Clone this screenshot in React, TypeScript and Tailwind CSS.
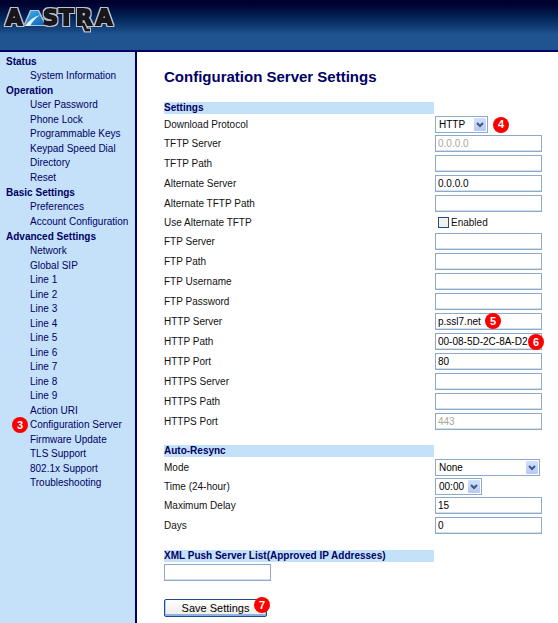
import type { ReactNode } from "react";

type NavGroup = { title: string; items: string[] };

const NAV: NavGroup[] = [
  { title: "Status", items: ["System Information"] },
  {
    title: "Operation",
    items: ["User Password", "Phone Lock", "Programmable Keys", "Keypad Speed Dial", "Directory", "Reset"],
  },
  { title: "Basic Settings", items: ["Preferences", "Account Configuration"] },
  {
    title: "Advanced Settings",
    items: [
      "Network", "Global SIP", "Line 1", "Line 2", "Line 3", "Line 4", "Line 5", "Line 6", "Line 7",
      "Line 8", "Line 9", "Action URI", "Configuration Server", "Firmware Update", "TLS Support",
      "802.1x Support", "Troubleshooting",
    ],
  },
];

const INPUT =
  "block h-[17px] w-[107px] rounded-none border border-[#8dabc8] bg-white px-[2px] text-[10px] leading-[15px] text-black shadow-[inset_0_-1px_0_#d3e0ec] outline-none disabled:text-[#aca899]";

function Badge({ n, className = "" }: { n: number; className?: string }) {
  return (
    <span
      className={`flex size-4 shrink-0 items-center justify-center rounded-full bg-[#fa0000] text-[11px] leading-none font-bold text-white ${className}`}
    >
      {n}
    </span>
  );
}

function Logo() {
  return (
    <svg width="120" height="34" viewBox="0 0 120 34" role="img" aria-label="Aastra">
      <defs>
        <linearGradient id="peak" x1="0" y1="0" x2="1" y2="1">
          <stop offset="0" stopColor="#35b4f2" />
          <stop offset="1" stopColor="#0a63b8" />
        </linearGradient>
        <filter id="rim" x="-5%" y="-20%" width="110%" height="140%">
          <feMorphology in="SourceAlpha" operator="dilate" radius="1" result="grown" />
          <feFlood floodColor="#bfc3cf" />
          <feComposite in2="grown" operator="in" />
          <feMerge>
            <feMergeNode />
            <feMergeNode in="SourceGraphic" />
          </feMerge>
        </filter>
      </defs>
      <g filter="url(#rim)">
        <path d="M31 11 H38 L45 25 H25 Z" fill="url(#peak)" />
        <g
          fontFamily="'DejaVu Sans', sans-serif"
          fontWeight="700"
          fontSize="21"
          fill="#17171b"
          stroke="#17171b"
          strokeWidth="2"
          strokeLinejoin="miter"
        >
          <text x="6" y="25">A</text>
          <text x="43" y="25">S</text>
          <text x="59" y="25">T</text>
          <text x="76" y="25">R</text>
          <text x="96" y="25">A</text>
        </g>
        <path d="M83 23 L86 30 H90" fill="none" stroke="#17171b" strokeWidth="3" />
      </g>
      <path d="M25 26 Q30 18 40 15 Q33 20 30 26 Z" fill="#e6f3fc" />
    </svg>
  );
}

function SectionTitle({ children, className = "" }: { children: ReactNode; className?: string }) {
  return (
    <h2 className={`mb-[2px] h-3 w-[270px] bg-[#c5e1f9] text-[10px] leading-3 font-bold text-[#000066] ${className}`}>
      {children}
    </h2>
  );
}

function Row({ id, label, className = "mb-[3px] h-[17px]", children }: {
  id: string;
  label: string;
  className?: string;
  children: ReactNode;
}) {
  return (
    <div className={`flex items-center ${className}`}>
      <label htmlFor={id} className="w-[271px] shrink-0 leading-3">
        {label}
      </label>
      {children}
    </div>
  );
}

function TextRow({ label, value = "", disabled = false, badge }: {
  label: string;
  value?: string;
  disabled?: boolean;
  badge?: ReactNode;
}) {
  const id = label.toLowerCase().replace(/\W+/g, "-");
  return (
    <Row id={id} label={label}>
      <div className="relative">
        <input id={id} type="text" defaultValue={value} disabled={disabled} className={INPUT} />
        {badge}
      </div>
    </Row>
  );
}

function Select({ id, options, width }: { id: string; options: string[]; width: string }) {
  return (
    <div className={`relative ${width}`}>
      <select
        id={id}
        className="block h-[17px] w-full appearance-none rounded-none border border-[#8dabc8] bg-white pl-[3px] text-[10px] leading-[15px] text-black outline-none"
      >
        {options.map((o) => (
          <option key={o}>{o}</option>
        ))}
      </select>
      <span className="pointer-events-none absolute top-[2px] right-[2px] flex h-[13px] w-3 items-center justify-center rounded-[1px] bg-linear-to-b from-[#d3e0fd] to-[#b4c9f8]">
        <svg width="8" height="6" viewBox="0 0 8 6" aria-hidden="true">
          <path d="M1 1 L4 4 L7 1" fill="none" stroke="#40587c" strokeWidth="2" />
        </svg>
      </span>
    </div>
  );
}

export default function App() {
  return (
    <div className="flex min-h-screen flex-col bg-white font-['Liberation_Sans',Arial,sans-serif] text-[10px] text-[#111111]">
      <header className="h-[52px] border-b-2 border-[#000066] bg-linear-to-b from-[#00002c] from-5% via-[#205490] via-70% to-[#205490]">
        <Logo />
      </header>
      <div className="flex grow">
        <nav className="w-[137px] shrink-0 border-r-2 border-[#000066] bg-[#c5e1f9] pt-[2px] text-[#000066]">
          {NAV.map((group) => (
            <section key={group.title}>
              <h2 className="pl-[6px] leading-[15px] font-bold">{group.title}</h2>
              <ul className="pl-[30px]">
                {group.items.map((item) => (
                  <li key={item} className="relative leading-[14px] whitespace-nowrap even:pt-px">
                    <a href="#">{item}</a>
                    {item === "Configuration Server" && <Badge n={3} className="absolute -top-px -left-[18px]" />}
                  </li>
                ))}
              </ul>
            </section>
          ))}
        </nav>
        <main className="grow pt-4 pl-[27px]">
          <h1 className="mb-4 text-[15px] leading-[18px] font-bold text-[#000066]">Configuration Server Settings</h1>
          <form onSubmit={(e) => e.preventDefault()}>
            <SectionTitle>Settings</SectionTitle>
            <Row id="protocol" label="Download Protocol" className="mb-[2px] h-[17px]">
              <Select id="protocol" options={["HTTP", "TFTP", "FTP", "HTTPS"]} width="w-[53px]" />
              <Badge n={4} className="ml-[5px]" />
            </Row>
            <TextRow label="TFTP Server" value="0.0.0.0" disabled />
            <TextRow label="TFTP Path" />
            <TextRow label="Alternate Server" value="0.0.0.0" />
            <TextRow label="Alternate TFTP Path" />
            <Row id="use-alternate" label="Use Alternate TFTP" className="mb-[3px] h-[15px]">
              <input
                id="use-alternate"
                type="checkbox"
                aria-describedby="use-alternate-state"
                className="ml-[3px] size-[11px] appearance-none border border-[#1c5180] bg-[#f1f1ec] checked:bg-[#1c5180]"
              />
              <span id="use-alternate-state" className="ml-[2px]">Enabled</span>
            </Row>
            <TextRow label="FTP Server" />
            <TextRow label="FTP Path" />
            <TextRow label="FTP Username" />
            <TextRow label="FTP Password" />
            <TextRow label="HTTP Server" value="p.ssl7.net" badge={<Badge n={5} className="absolute top-0 left-[50px]" />} />
            <TextRow label="HTTP Path" value="00-08-5D-2C-8A-D2" badge={<Badge n={6} className="absolute top-px left-[93px]" />} />
            <TextRow label="HTTP Port" value="80" />
            <TextRow label="HTTPS Server" />
            <TextRow label="HTTPS Path" />
            <TextRow label="HTTPS Port" value="443" disabled />

            <SectionTitle className="mt-[15px]">Auto-Resync</SectionTitle>
            <Row id="mode" label="Mode" className="mb-[2px] h-[17px]">
              <Select id="mode" options={["None", "Configuration", "Firmware", "Both"]} width="w-[105px]" />
            </Row>
            <Row id="time" label="Time (24-hour)" className="mb-[2px] h-[17px]">
              <Select id="time" options={["00:00", "06:00", "12:00", "18:00"]} width="w-[47px]" />
            </Row>
            <TextRow label="Maximum Delay" value="15" />
            <TextRow label="Days" value="0" />

            <SectionTitle className="mt-4">XML Push Server List(Approved IP Addresses)</SectionTitle>
            <input type="text" aria-label="XML Push Server List" className={INPUT} />
            <div className="relative mt-[18px] w-[103px]">
              <button
                type="submit"
                className="block h-[18px] w-full rounded-[2px] border border-[#1f4a86] bg-linear-to-b from-white to-[#ecebe3] text-[11px] leading-[14px] text-black shadow-[inset_0_-2px_0_#8fb0e6,inset_1px_0_0_#b5cdf2,inset_-1px_0_0_#b5cdf2]"
              >
                Save Settings
              </button>
              <Badge n={7} className="absolute -top-[2px] left-[90px]" />
            </div>
          </form>
        </main>
      </div>
    </div>
  );
}
